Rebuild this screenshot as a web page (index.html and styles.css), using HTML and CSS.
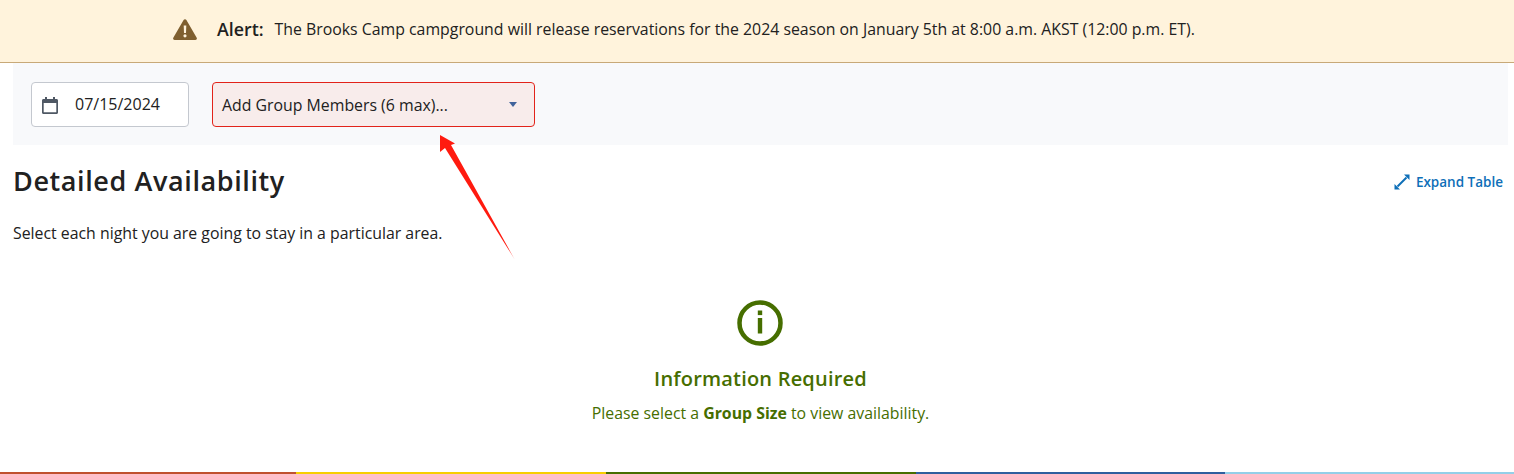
FILE: index.html
```html
<!DOCTYPE html>
<html lang="en">
<head>
<meta charset="utf-8">
<title>Detailed Availability</title>
<link rel="stylesheet" href="styles.css">
</head>
<body>
<div class="alert">
  <svg class="alert-icon" viewBox="0 0 24 21" aria-hidden="true"><path fill="#7f5f2f" fill-rule="evenodd" d="M12 .3c.6 0 1.100.3 1.400.8l10.300 17.600c.6 1-.1 2.200-1.300 2.200H1.600C.4 20.900-.3 19.700.3 18.700L10.600 1.100c.3-.5.800-.8 1.400-.8ZM10.700 6.500l.3 7.500h2l.3-7.500h-2.600ZM12 15.200a1.600 1.600 0 1 0 0 3.200 1.600 1.600 0 0 0 0-3.200Z"/></svg>
  <strong class="alert-label">Alert:</strong>
  <span class="alert-text">The Brooks Camp campground will release reservations for the 2024 season on January 5th at 8:00 a.m. AKST (12:00 p.m. ET).</span>
</div>
<main class="content">
  <div class="filters">
    <div class="date-field">
      <svg class="cal-icon" viewBox="0 0 16 17" aria-hidden="true"><path fill="#4f5864" fill-rule="evenodd" d="M3 0h2v2h6V0h2v2h1.500C15.400 2 16 2.700 16 3.500v12c0 .9-.6 1.500-1.500 1.500h-13C.6 17 0 16.400 0 15.500v-12C0 2.700.6 2 1.500 2H3V0ZM1.700 6v9.300h12.600V6H1.700Z"/></svg>
      <span class="date-value">07/15/2024</span>
    </div>
    <div class="group-select">
      <span>Add Group Members (6 max)...</span>
      <span class="caret"></span>
    </div>
  </div>
  <div class="heading-row">
    <h1 class="title">Detailed Availability</h1>
    <a class="expand" href="#">
      <svg class="expand-icon" viewBox="0 0 16 16" aria-hidden="true"><path fill="none" stroke="#0e6fb8" stroke-width="2" d="M3.500 12.500 12.500 3.500"/><path fill="#0e6fb8" d="M10 .5H15.500V6ZM.5 10V15.500H6Z"/></svg>
      Expand Table
    </a>
  </div>
  <p class="intro">Select each night you are going to stay in a particular area.</p>
  <section class="notice">
    <svg class="info-icon" viewBox="0 0 46 46" aria-hidden="true"><circle cx="23" cy="23" r="20.500" fill="none" stroke="#466e00" stroke-width="4.500"/><rect x="20.800" y="10.500" width="4.400" height="4.600" fill="#466e00"/><rect x="20.800" y="18" width="4.400" height="15.500" fill="#466e00"/></svg>
    <h2 class="notice-title">Information Required</h2>
    <p class="notice-text">Please select a <strong>Group Size</strong> to view availability.</p>
  </section>
</main>
<div class="color-bar"><span class="c1"></span><span class="c2"></span><span class="c3"></span><span class="c4"></span><span class="c5"></span></div>
<svg class="annotation" viewBox="0 0 1514 474" aria-hidden="true">
  <defs><linearGradient id="tail" x1="440" y1="136" x2="514" y2="258" gradientUnits="userSpaceOnUse"><stop offset="0" stop-color="#ff1a0f"/><stop offset=".93" stop-color="#ff1a0f"/><stop offset="1" stop-color="#ff1a0f" stop-opacity=".4"/></linearGradient></defs>
  <path fill="url(#tail)" d="M440 135 455 143.500 451 145 515 260 445 148 440 152Z"/>
</svg>
</body>
</html>
```
FILE: styles.css
```css
* { box-sizing: border-box; }
html, body { margin: 0; padding: 0; }
body {
  position: relative;
  width: 1514px;
  height: 474px;
  overflow: hidden;
  background: #fff;
  color: #212121;
  font-family: "Open Sans", sans-serif;
  font-size: 15.85px;
  display: flex;
  flex-direction: column;
}
.alert {
  height: 63px;
  flex: none;
  background: #fff3dc;
  border-bottom: 1px solid #c8a978;
  display: flex;
  align-items: center;
  padding: 0 0 4px 173px;
}
.alert-icon { width: 24px; height: 21px; margin-right: 20px; }
.alert-label { font-weight: 600; font-size: 17.800px; margin-right: 11px; }
.alert-text { font-size: 15.85px; }
.content { flex: 1; padding: 0 6px 0 13px; }
.filters {
  height: 82px;
  background: #f8f9fb;
  display: flex;
  gap: 23px;
  padding: 19px 0 0 18px;
}
.date-field {
  width: 158px;
  height: 45px;
  background: #fff;
  border: 1px solid #c4c8cf;
  border-radius: 4px;
  display: flex;
  align-items: flex-start;
  padding: 10px 0 0 10px;
  font-size: 16px;
  line-height: 22px;
}
.cal-icon { width: 16px; height: 17px; margin: 4px 17px 0 0; }
.group-select {
  width: 323px;
  height: 45px;
  background: #f8eceb;
  border: 1px solid #e2231a;
  border-radius: 4px;
  display: flex;
  align-items: center;
  justify-content: space-between;
  padding: 0 17px 0 9px;
  font-size: 15.85px;
}
.caret {
  width: 0;
  height: 0;
  border-left: 4.500px solid transparent;
  border-right: 4.500px solid transparent;
  border-top: 5px solid #41639b;
  margin-bottom: 1px;
}
.heading-row {
  display: flex;
  justify-content: space-between;
  align-items: center;
  padding: 18px 5px 0 0;
}
.title { margin: 0; font-size: 27px; line-height: 36px; font-weight: 600; letter-spacing: .6px; color: #212121; }
.expand {
  display: flex;
  align-items: center;
  gap: 6px;
  margin-top: 1px;
  color: #0e6fb8;
  font-size: 13.500px;
  font-weight: 600;
  text-decoration: none;
}
.expand-icon { width: 16px; height: 16px; }
.intro { margin: 24px 0 0; font-size: 15.85px; line-height: 20px; }
.notice {
  display: flex;
  flex-direction: column;
  align-items: center;
  color: #466e00;
  padding: 57px 0 0 0;
  margin-right: -6px;
  margin-left: -6px;
}
.info-icon { width: 46px; height: 46px; margin-right: 2px; }
.notice-title { margin: 20px 0 0; font-size: 20px; line-height: 26px; font-weight: 600; letter-spacing: .2px; }
.notice-text { margin: 10px 0 0; font-size: 15.85px; line-height: 22px; }
.notice-text strong { font-weight: 700; }
.color-bar {
  flex: none;
  height: 2px;
  display: grid;
  grid-template-columns: 296px 310px 310px 309px 1fr;
}
.c1 { background: #c0512f; }
.c2 { background: #f7ce00; }
.c3 { background: #466e00; }
.c4 { background: #2f5f9e; }
.c5 { background: #93cfe8; }
.annotation { position: absolute; inset: 0; width: 1514px; height: 474px; pointer-events: none; }
```
